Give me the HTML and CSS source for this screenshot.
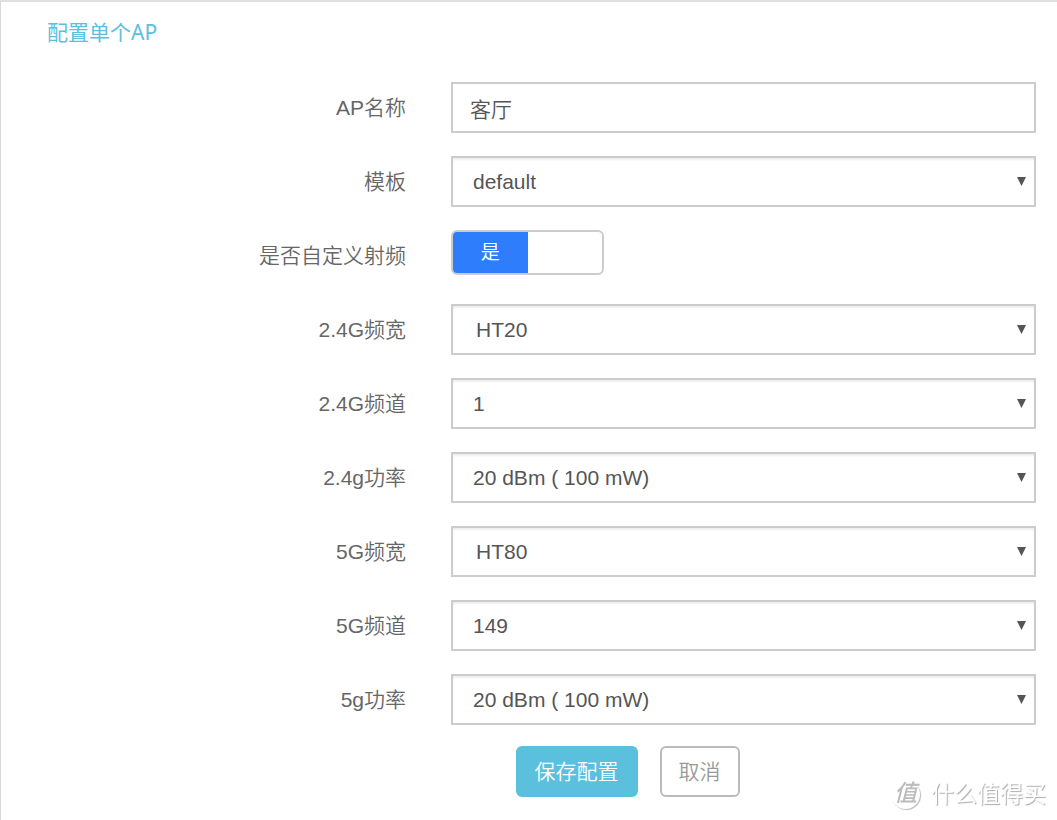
FILE: index.html
```html
<!DOCTYPE html>
<html lang="zh-CN">
<head>
<meta charset="utf-8">
<meta name="viewport" content="width=device-width, initial-scale=1">
<title>配置单个AP</title>
<link rel="stylesheet" href="styles.css">
</head>
<body>
<main class="panel">
  <h1 class="panel-title">配置单个AP</h1>
  <form class="form">
    <div class="row">
      <label class="label" for="name">AP名称</label>
      <input class="control control-text" id="name" type="text" value="客厅">
    </div>
    <div class="row">
      <label class="label" for="template">模板</label>
      <span class="select"><select class="control control-select" id="template"><option>default</option></select></span>
    </div>
    <div class="row">
      <label class="label" for="custom">是否自定义射频</label>
      <span class="switch">
        <input class="switch-input" id="custom" type="checkbox" checked>
        <span class="switch-on">是</span>
      </span>
    </div>
    <div class="row">
      <label class="label" for="width24">2.4G频宽</label>
      <span class="select"><select class="control control-select control-width" id="width24"><option>HT20</option></select></span>
    </div>
    <div class="row">
      <label class="label" for="channel24">2.4G频道</label>
      <span class="select"><select class="control control-select" id="channel24"><option>1</option></select></span>
    </div>
    <div class="row">
      <label class="label" for="power24">2.4g功率</label>
      <span class="select"><select class="control control-select" id="power24"><option>20 dBm ( 100 mW)</option></select></span>
    </div>
    <div class="row">
      <label class="label" for="width5">5G频宽</label>
      <span class="select"><select class="control control-select control-width" id="width5"><option>HT80</option></select></span>
    </div>
    <div class="row">
      <label class="label" for="channel5">5G频道</label>
      <span class="select"><select class="control control-select" id="channel5"><option>149</option></select></span>
    </div>
    <div class="row">
      <label class="label" for="power5">5g功率</label>
      <span class="select"><select class="control control-select" id="power5"><option>20 dBm ( 100 mW)</option></select></span>
    </div>
    <div class="actions">
      <button class="button button-primary" type="submit">保存配置</button>
      <button class="button button-plain" type="button">取消</button>
    </div>
  </form>
</main>
<div class="watermark">
  <span class="watermark-badge">值</span>
  <span>什么值得买</span>
</div>
</body>
</html>
```

FILE: styles.css
```css
* {
  box-sizing: border-box;
}

body {
  margin: 0;
  background: #fff;
  color: #666;
  font: 350 21px/30px "Liberation Sans", "Noto Sans CJK SC", sans-serif;
}

.panel {
  min-height: 100vh;
  padding: 15px 21px 23px 0;
  border-top: 2px solid #e0e0e0;
  border-left: 1px solid #d8d8d8;
}

.panel-title {
  margin: 0 0 35px 46px;
  color: #5bc0de;
  font: 400 21px/30px "Noto Sans", "Noto Sans CJK SC", sans-serif;
}

.row {
  display: grid;
  grid-template-columns: 9fr 13fr;
  column-gap: 45px;
  min-height: 51px;
}

.row + .row {
  margin-top: 23px;
}

.label {
  align-self: center;
  text-align: right;
}

.control {
  width: 100%;
  height: 51px;
  margin: 0;
  padding: 0 40px 0 20px;
  border: 2px solid #ccc;
  border-radius: 0;
  background: #fff;
  color: #555;
  font: inherit;
}

.control-text {
  padding-left: 17px;
}

.control-select {
  appearance: none;
  box-shadow: inset 0 2px 2px rgba(0, 0, 0, 0.07);
}

.control-width {
  padding-left: 23px;
}

.select {
  position: relative;
  display: block;
}

.select::after {
  content: "";
  position: absolute;
  top: 21px;
  right: 10px;
  width: 9px;
  height: 9px;
  background: #555;
  clip-path: polygon(0 0, 100% 0, 50% 100%);
  pointer-events: none;
}

.switch {
  position: relative;
  display: flex;
  width: 153px;
  height: 45px;
  overflow: hidden;
  border: 2px solid #ccc;
  border-radius: 6px;
}

.switch-input {
  position: absolute;
  inset: 0;
  width: 100%;
  height: 100%;
  margin: 0;
  opacity: 0;
}

.switch-on {
  width: 50%;
  background: #2d7dfc;
  color: #fff;
  font-size: 19px;
  font-weight: 400;
  line-height: 41px;
  text-align: center;
}

.actions {
  display: grid;
  grid-template-columns: auto auto;
  justify-content: center;
  gap: 22px;
  margin-top: 21px;
  padding-left: 218px;
}

.button {
  height: 51px;
  padding: 0 17px;
  border: 2px solid #5bc0de;
  border-radius: 6px;
  font: inherit;
}

.button-primary {
  background: #5bc0de;
  color: #fff;
}

.button-plain {
  border-color: #bbb;
  background: #fff;
  color: #999;
}

.watermark {
  position: fixed;
  right: 11px;
  bottom: 11px;
  display: flex;
  align-items: center;
  gap: 11px;
  color: #fff;
  font-size: 23px;
  font-weight: 400;
  text-shadow: 1px 1px 1px #aaa;
  pointer-events: none;
}

.watermark-badge {
  width: 29px;
  height: 29px;
  border-radius: 50%;
  box-shadow: 1px 1px 1px #bbb;
  color: #bbb;
  font-style: italic;
  font-weight: 500;
  line-height: 27px;
  text-align: center;
  text-shadow: none;
}
```
